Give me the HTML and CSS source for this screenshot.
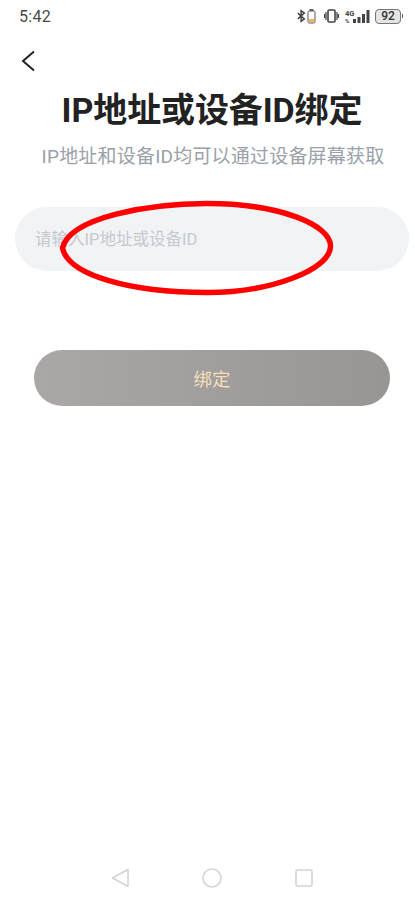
FILE: index.html
```html
<!DOCTYPE html>
<html lang="zh">
<head>
<meta charset="utf-8">
<title>IP地址或设备ID绑定</title>
<link rel="stylesheet" href="styles.css">
</head>
<body>
<div class="screen">
  <div class="status">
    <span class="time">5:42</span>
    <div class="status-icons">
      <svg class="ic" width="9" height="14" viewBox="0 0 11 14"><path d="M1 3.500l8 7-4 3V.5l4 3-8 7" fill="none" stroke="#444" stroke-width="1.800"/></svg>
      <svg class="ic" width="9" height="15" viewBox="0 0 9 15"><rect x="2.500" y="0" width="4" height="2" fill="#666"/><rect x="1" y="2" width="7" height="12" rx="1.500" fill="#fff" stroke="#555"/><rect x="2" y="10" width="5" height="3" fill="#f0b45a"/></svg>
      <svg class="ic vib" width="15" height="14" viewBox="0 0 15 14"><rect x="4" y="1" width="7" height="12" rx="1" fill="none" stroke="#444" stroke-width="1.600"/><path d="M2 3v8M13 3v8M.6 5v4M14.400 5v4" stroke="#444" stroke-width="1.200"/></svg>
      <svg class="ic sig" width="25" height="15" viewBox="0 0 25 15"><text x="0" y="7" class="sig-text">4G</text><text x="0" y="14" class="sig-small">%</text><rect x="8" y="10" width="3" height="4" fill="#444"/><rect x="12.500" y="8" width="3" height="6" fill="#444"/><rect x="17" y="5" width="3" height="9" fill="#444"/><rect x="21.500" y="1" width="3" height="13" fill="#444"/></svg>
      <div class="battery"><span class="battery-body">92</span><span class="battery-tip"></span></div>
    </div>
  </div>
  <div class="nav">
    <svg width="14" height="22" viewBox="0 0 14 22"><path d="M13 1.500L2 11l11 9.500" fill="none" stroke="#222" stroke-width="2"/></svg>
  </div>
  <h1 class="title">IP地址或设备ID绑定</h1>
  <p class="subtitle">IP地址和设备ID均可以通过设备屏幕获取</p>
  <div class="field">
    <span class="placeholder">请输入IP地址或设备ID</span>
  </div>
  <div class="button">绑定</div>
  <div class="spacer"></div>
  <div class="softkeys">
    <svg width="18" height="20" viewBox="0 0 18 20"><path d="M17 1.500v17L1.500 10z" fill="none" stroke="#d4d4d4" stroke-width="1.600" stroke-linejoin="round"/></svg>
    <svg width="20" height="20" viewBox="0 0 20 20"><circle cx="10" cy="10" r="9" fill="none" stroke="#d4d4d4" stroke-width="1.600"/></svg>
    <svg width="18" height="18" viewBox="0 0 18 18"><rect x="1" y="1" width="16" height="16" rx="1.500" fill="none" stroke="#d4d4d4" stroke-width="1.600"/></svg>
  </div>
  <svg class="scribble" width="415" height="900" viewBox="0 0 415 900"><path d="M62.500 248C70 217 150 203.500 207 203.500C280 203.500 330.500 225 330.500 246C330.500 270 270 292.500 207 292.500C130 292.500 68 275 62.500 248Z" fill="none" stroke="#f00" stroke-width="5.500"/></svg>
</div>
</body>
</html>
```
FILE: styles.css
```css
* { box-sizing: border-box; }
html, body { margin: 0; padding: 0; background: #fff; }
body { font-family: Roboto, "Noto Sans CJK SC", sans-serif; }
.screen { position: relative; width: 415px; height: 900px; overflow: hidden; display: flex; flex-direction: column; background: #fff; }
.status { height: 32px; display: flex; align-items: center; justify-content: space-between; padding: 0 12px 0 19px; }
.time { font-size: 16px; color: #4a4a4a; letter-spacing: 0.3px; }
.status-icons { display: flex; align-items: center; gap: 1px; }
.ic { display: block; }
.vib { margin-left: 7px; }
.sig { margin-left: 5px; }
.sig-text { font: 700 7.5px Roboto, sans-serif; fill: #444; }
.sig-small { font: 700 6px Roboto, sans-serif; fill: #444; }
.battery { display: flex; align-items: center; margin-left: 4px; }
.battery-body { width: 26px; height: 15px; border: 1.5px solid #777; border-radius: 4px; background: #e4e4e4; font-size: 12px; font-weight: 500; line-height: 12px; text-align: center; color: #333; }
.battery-tip { width: 1px; height: 4px; background: #666; margin-left: 1px; }
.nav { height: 30px; margin-top: 14px; padding-left: 21px; display: flex; align-items: center; }
.title { margin: 14px 0 0; padding-left: 9px; font-size: 34px; line-height: 40px; font-weight: 700; color: #222; text-align: center; letter-spacing: -0.1px; }
.subtitle { margin: 14px 0 0; padding-left: 11px; font-size: 19px; line-height: 26px; color: #9aa1a9; text-align: center; letter-spacing: 0.2px; white-space: nowrap; }
.field { margin: 37px 6px 0 15px; height: 64px; border-radius: 32px; background: #f2f3f5; display: flex; align-items: center; padding: 0 20px 2px; }
.placeholder { font-size: 16.5px; color: #c5c9cf; }
.button { margin: 79px 25px 0 34px; height: 56px; border-radius: 28px; background: linear-gradient(90deg, #aaa7a6, #989694); display: flex; align-items: center; justify-content: center; color: #f3dfb8; font-size: 18.5px; }
.spacer { flex: 1; }
.softkeys { height: 44px; padding: 0 102px 0 111px; display: flex; align-items: center; justify-content: space-between; }
.scribble { position: absolute; left: 0; top: 0; pointer-events: none; }
```
